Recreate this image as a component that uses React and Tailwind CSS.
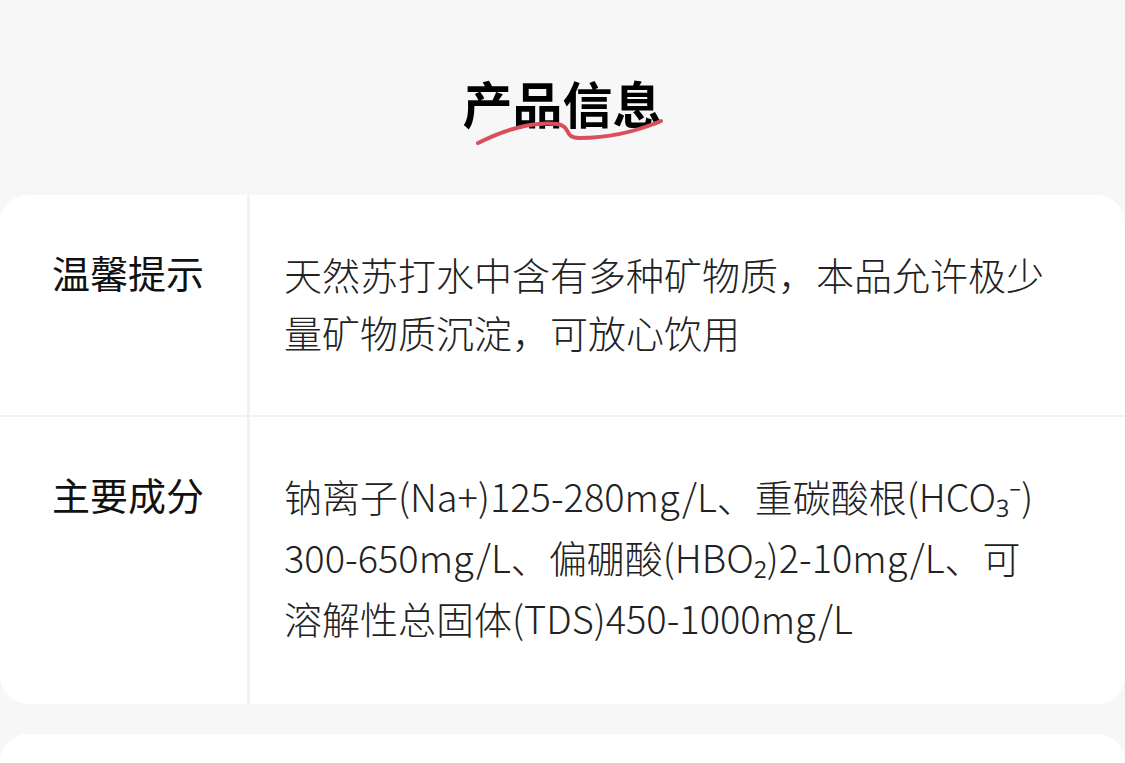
import React from 'react'

const font = { fontFamily: '"Noto Sans CJK SC", "Noto Sans", sans-serif' }

const Row = ({ label, lines, last, className }) => (
    <div className={`flex ${last ? '' : 'border-b-2 border-[#f2f2f2]'}`}>
        <div className="w-[250px] shrink-0 border-r-[3px] border-[#f2f2f2] pl-[52px] pt-[48px] text-[38px] leading-[58px] text-[#111]">
            {label}
        </div>
        <div className={`flex-1 pl-[34px] text-[38px] font-light text-[#222] whitespace-nowrap ${className}`}>
            {lines.map((l, i) => (
                <div key={i}>{l}</div>
            ))}
        </div>
    </div>
)

const App = () => {
    return (
        <div className="w-[1125px] h-[763px] overflow-hidden bg-[#f7f7f7]" style={font}>
            <div className="h-[195px] flex justify-center pt-[72px]">
                <div className="relative h-[60px]">
                    <h2 className="text-[50px] font-bold leading-[60px] text-black">产品信息</h2>
                    <svg className="absolute left-[12px] top-[44px]" width="190" height="32" viewBox="0 0 190 32" fill="none">
                        <path
                            d="M3 27 C 25 16, 55 5, 82 8 C 97 10, 88 22, 104 22 C 132 22, 160 16, 186 5"
                            stroke="#d9505c"
                            strokeWidth="4"
                            strokeLinecap="round"
                        />
                    </svg>
                </div>
            </div>

            <div className="bg-white rounded-[28px] overflow-hidden">
                <Row
                    label="温馨提示"
                    className="pt-[50px] pb-[54px] leading-[58px]"
                    lines={['天然苏打水中含有多种矿物质，本品允许极少', '量矿物质沉淀，可放心饮用']}
                />
                <Row
                    label="主要成分"
                    last
                    className="pt-[48px] pb-[56px] leading-[61px]"
                    lines={[
                        '钠离子(Na+)125-280mg/L、重碳酸根(HCO₃⁻)',
                        '300-650mg/L、偏硼酸(HBO₂)2-10mg/L、可',
                        '溶解性总固体(TDS)450-1000mg/L',
                    ]}
                />
            </div>

            <div className="mt-[30px] bg-white rounded-[28px] h-[120px]"></div>
        </div>
    )
}

export default App
